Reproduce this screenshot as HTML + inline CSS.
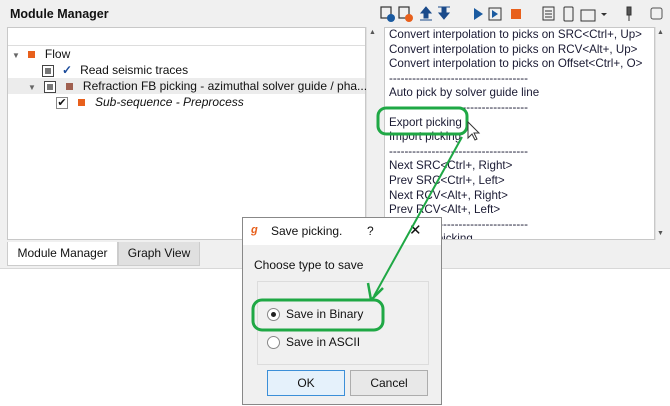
<!DOCTYPE html>
<html><head><style>
*{margin:0;padding:0;box-sizing:border-box}
body{width:670px;height:406px;background:#fff;position:relative;overflow:hidden;font-family:"Liberation Sans",sans-serif;font-size:12px;color:#111}
.a{position:absolute}
.panel{left:0;top:0;width:670px;height:269px;background:#f0f0f0;border-bottom:1px solid #d8d8d8}
.title{left:10px;top:7px;font-weight:bold;font-size:12.5px}
.tree{left:7px;top:27px;width:359px;height:213px;background:#fff;border:1px solid #c8c8c8}
.hdr{left:0;top:0;width:357px;height:18px;border-bottom:1px solid #ddd}
.row{position:absolute;left:0;width:357px;height:16px;line-height:16px;white-space:nowrap}
.sb{background:#f0f0f0;border-left:1px solid #e0e0e0}
.list{left:384px;top:27px;width:271px;height:213px;background:#fff;border:1px solid #c8c8c8;overflow:hidden;font-size:11.6px}
.list div{height:14.6px;line-height:14.6px;padding-left:4px;white-space:nowrap;color:#1a1a33}
.sq{display:inline-block;width:7px;height:7px;vertical-align:middle}
.cb{display:inline-block;width:12px;height:12px;border:1px solid #444;background:#fff;vertical-align:middle;position:relative}
.cb i{position:absolute;left:2px;top:2px;width:6px;height:6px;background:#777}
.tab{top:242px;height:24px;line-height:23px;text-align:center;border:1px solid #ccc}
.dlg{left:242px;top:217px;width:200px;height:188px;background:#f0f0f0;border:1px solid #888}
.btn{top:152px;width:78px;height:26px;border:1px solid #adadad;background:#e8e8e8;text-align:center;line-height:24px}
.rad{display:inline-block;width:13px;height:13px;border-radius:50%;border:1px solid #888;background:#fff;vertical-align:middle;position:relative;margin-right:6px}
</style></head><body>
<div class="a panel"></div>
<div class="a title">Module Manager</div>
<svg class="a" style="left:378px;top:4px" width="290" height="20">
 <g fill="none" stroke="#333" stroke-width="1.2"><rect x="3" y="3" width="10" height="11"/><rect x="21" y="3" width="10" height="11"/></g>
 <circle cx="13" cy="14" r="4" fill="#1a5aa0"/><circle cx="31" cy="14" r="4" fill="#e8601c"/>
 <path d="M48 3 l-5 6 h3 v5 h4 v-5 h3 z M42 16 h12" fill="#1a4a8a" stroke="#1a4a8a"/>
 <path d="M66 15 l-5 -6 h3 v-5 h4 v5 h3 z M60 3 h12" fill="#1a4a8a" stroke="#1a4a8a"/>
 <path d="M96 4 l9 6 l-9 6z" fill="#1a5aa0"/>
 <rect x="111" y="4" width="12" height="12" fill="none" stroke="#333"/><path d="M114 6 l6 4 l-6 4z" fill="#1a5aa0"/>
 <rect x="133" y="5" width="10" height="10" fill="#e8601c"/>
 <rect x="165" y="3" width="11" height="13" fill="none" stroke="#333"/><path d="M167 7h7M167 10h7M167 13h7" stroke="#333"/>
 <rect x="186" y="3" width="9" height="14" rx="1" fill="none" stroke="#333"/>
 <rect x="203" y="6" width="14" height="11" fill="none" stroke="#333"/><path d="M223 9 l3 3 l3 -3z" fill="#333"/>
 <path d="M249 3 h4 v8 h-4z M251 11 v6" stroke="#333" fill="#555"/>
 <rect x="273" y="4" width="11" height="11" rx="2" fill="none" stroke="#555"/>
</svg>
<div class="a tree">
 <div class="a hdr"></div>
 <div class="row" style="top:18px"><span style="color:#666;font-size:8px;margin-left:4px">▼</span><span class="sq" style="background:#e8601c;margin-left:8px"></span><span style="margin-left:10px">Flow</span></div>
 <div class="row" style="top:34px"><span class="cb" style="margin-left:34px"><i></i></span><span style="color:#1a4a9a;margin-left:8px;font-weight:bold">✓</span><span style="margin-left:8px">Read seismic traces</span></div>
 <div class="row" style="top:50px;background:#ececec"><span style="color:#666;font-size:8px;margin-left:20px">▼</span><span class="cb" style="margin-left:8px"><i></i></span><span class="sq" style="background:#a06050;margin-left:10px"></span><span style="margin-left:10px">Refraction FB picking - azimuthal solver guide / pha...</span></div>
 <div class="row" style="top:66px"><span class="cb" style="margin-left:48px;border-color:#888;font-size:11px;line-height:10px;text-align:center">✔</span><span class="sq" style="background:#e8601c;margin-left:10px"></span><span style="margin-left:10px;font-style:italic">Sub-sequence - Preprocess</span></div>
</div>
<div class="a sb" style="left:366px;top:27px;width:15px;height:213px"></div>
<div class="a" style="left:369px;top:29px;font-size:7px;color:#555">▲</div>
<div class="a list">
<div>Convert interpolation to picks on SRC&lt;Ctrl+, Up&gt;</div>
<div>Convert interpolation to picks on RCV&lt;Alt+, Up&gt;</div>
<div>Convert interpolation to picks on Offset&lt;Ctrl+, O&gt;</div>
<div>------------------------------------</div>
<div>Auto pick by solver guide line</div>
<div>------------------------------------</div>
<div>Export picking</div>
<div>Import picking</div>
<div>------------------------------------</div>
<div>Next SRC&lt;Ctrl+, Right&gt;</div>
<div>Prev SRC&lt;Ctrl+, Left&gt;</div>
<div>Next RCV&lt;Alt+, Right&gt;</div>
<div>Prev RCV&lt;Alt+, Left&gt;</div>
<div>------------------------------------</div>
<div>Save 2D picking</div>
</div>
<div class="a sb" style="left:655px;top:27px;width:13px;height:213px"></div>
<div class="a" style="left:657px;top:29px;font-size:7px;color:#555">▲</div>
<div class="a" style="left:657px;top:230px;font-size:7px;color:#555">▼</div>
<div class="a tab" style="left:7px;width:111px;background:#fff;border-top:none">Module Manager</div>
<div class="a tab" style="left:118px;width:82px;background:#e0e0e0;border-top:none">Graph View</div>
<div class="a dlg">
 <div class="a" style="left:0;top:0;width:198px;height:27px;background:#fff"></div>
 <div class="a" style="left:8px;top:6px;color:#e8601c;font-weight:bold;font-style:italic;font-size:11px">g</div>
 <div class="a" style="left:28px;top:6px">Save picking.</div>
 <div class="a" style="left:124px;top:6px">?</div>
 <div class="a" style="left:166px;top:3px;font-size:15px">✕</div>
 <div class="a" style="left:11px;top:40px">Choose type to save</div>
 <div class="a" style="left:14px;top:63px;width:172px;height:84px;border:1px solid #dcdcdc"></div>
 <div class="a" style="left:24px;top:89px"><span class="rad"><i style="position:absolute;left:3px;top:3px;width:5px;height:5px;border-radius:50%;background:#222"></i></span>Save in Binary</div>
 <div class="a" style="left:24px;top:117px"><span class="rad"></span>Save in ASCII</div>
 <div class="a btn" style="left:24px;border-color:#3c8fd8;background:#e5f1fb">OK</div>
 <div class="a btn" style="left:107px">Cancel</div>
</div>
<svg class="a" style="left:0;top:0" width="670" height="406">
 <rect x="378" y="108" width="89" height="26" rx="8" fill="none" stroke="#1fa845" stroke-width="3"/>
 <rect x="253" y="300" width="130" height="30" rx="9" fill="none" stroke="#1fa845" stroke-width="3"/>
 <line x1="462" y1="137" x2="374" y2="296" stroke="#1fa845" stroke-width="2"/>
 <path d="M371 300 L368 283 M371 300 L383 288" stroke="#1fa845" stroke-width="2.5" fill="none"/>
 <path d="M468 122 l0 16 l4 -4 l3 6 l2 -1 l-3 -6 l5 0 z" fill="#fff" stroke="#333" stroke-width="1"/>
</svg>
</body></html>
